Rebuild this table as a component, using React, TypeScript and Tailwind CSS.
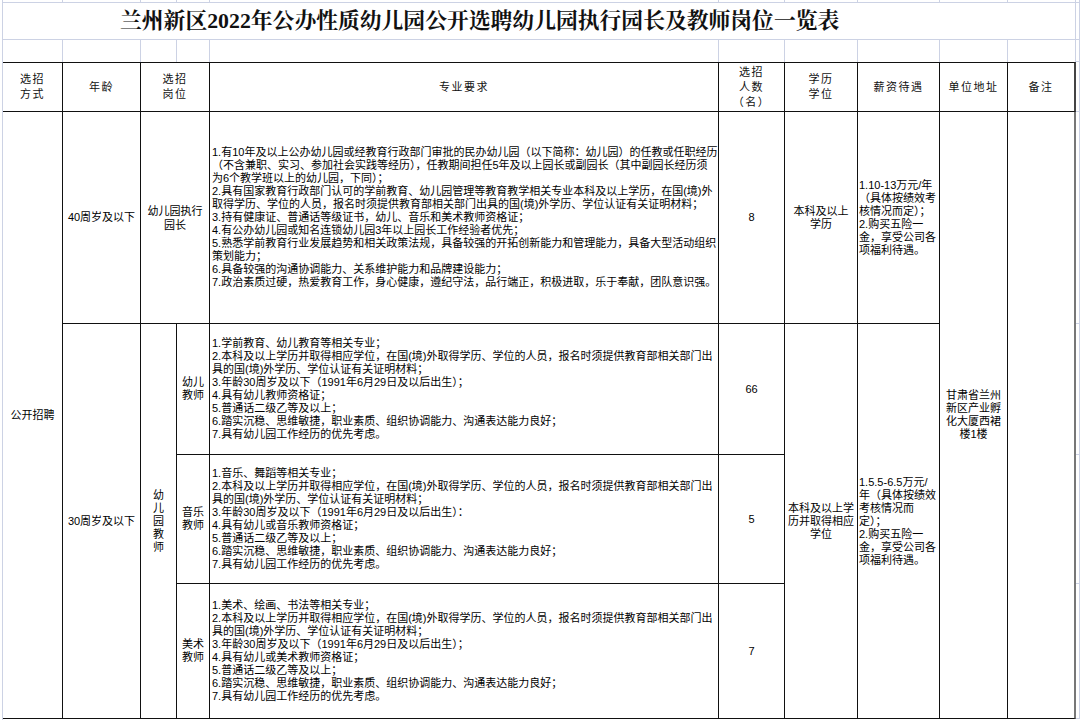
import type { ReactNode } from "react";

// Spreadsheet-style recruitment table: one CSS grid, cells placed by row/col start and span.
const DARK = "border-r border-b border-[#111]";
const LIGHT = "border-r border-b border-[#ccd2e4]";

const req1 = [
  "1.有10年及以上公办幼儿园或经教育行政部门审批的民办幼儿园（以下简称：幼儿园）的任教或任职经历",
  "（不含兼职、实习、参加社会实践等经历），任教期间担任5年及以上园长或副园长（其中副园长经历须",
  "为6个教学班以上的幼儿园，下同）；",
  "2.具有国家教育行政部门认可的学前教育、幼儿园管理等教育教学相关专业本科及以上学历，在国(境)外",
  "取得学历、学位的人员，报名时须提供教育部相关部门出具的国(境)外学历、学位认证有关证明材料；",
  "3.持有健康证、普通话等级证书，幼儿、音乐和美术教师资格证；",
  "4.有公办幼儿园或知名连锁幼儿园3年以上园长工作经验者优先；",
  "5.熟悉学前教育行业发展趋势和相关政策法规，具备较强的开拓创新能力和管理能力，具备大型活动组织",
  "策划能力；",
  "6.具备较强的沟通协调能力、关系维护能力和品牌建设能力；",
  "7.政治素质过硬，热爱教育工作，身心健康，遵纪守法，品行端正，积极进取，乐于奉献，团队意识强。",
];

const teacherReq = (first: string, age: string, cert: string) => [
  first,
  "2.本科及以上学历并取得相应学位，在国(境)外取得学历、学位的人员，报名时须提供教育部相关部门出",
  "具的国(境)外学历、学位认证有关证明材料；",
  age,
  cert,
  "5.普通话二级乙等及以上；",
  "6.踏实沉稳、思维敏捷，职业素质、组织协调能力、沟通表达能力良好；",
  "7.具有幼儿园工作经历的优先考虑。",
];

const AGE = "3.年龄30周岁及以下（1991年6月29日及以后出生）；";

const teachers = [
  { row: "row-start-6", post: ["幼儿", "教师"], count: "66", req: teacherReq("1.学前教育、幼儿教育等相关专业；", AGE, "4.具有幼儿教师资格证；") },
  {
    row: "row-start-7",
    post: ["音乐", "教师"],
    count: "5",
    req: teacherReq("1.音乐、舞蹈等相关专业；", "3.年龄30周岁及以下（1991年6月29日及以后出生）：", "4.具有幼儿或音乐教师资格证；"),
  },
  { row: "row-start-8", post: ["美术", "教师"], count: "7", req: teacherReq("1.美术、绘画、书法等相关专业；", AGE, "4.具有幼儿或美术教师资格证；") },
];

const Lines = ({ lines, className = "" }: { lines: string[]; className?: string }) => (
  <div className={className}>
    {lines.map((l, i) => (
      <div key={i} className="whitespace-nowrap">
        {l}
      </div>
    ))}
  </div>
);

const Head = ({ className, children }: { className: string; children: ReactNode }) => (
  <div
    className={`row-start-4 flex items-center justify-center border-t border-[#111] text-center text-[11px] leading-[15px] tracking-[1.5px] text-[#111] ${DARK} ${className}`}
  >
    {children}
  </div>
);

const Body = ({ className, children }: { className: string; children?: ReactNode }) => (
  <div className={`flex items-center justify-center text-center text-[11px] leading-[13px] text-black ${DARK} ${className}`}>
    {children}
  </div>
);

export default function App() {
  const topCols = ["col-start-2", "col-start-3", "col-start-4", "col-start-5", "col-start-6", "col-start-7", "col-start-8", "col-start-9", "col-start-10", "col-start-11"];

  return (
    <div className="grid h-[720px] w-[1080px] grid-cols-[3px_60px_78px_36px_33px_509px_66px_73px_82px_68px_68px_1fr] grid-rows-[3px_37px_22px_50px_212px_131px_129px_135px_1fr] overflow-hidden bg-white font-['Liberation_Sans','Noto_Sans_CJK_SC',sans-serif]">
      {/* left gridline */}
      <div className="col-start-1 row-span-9 row-start-1 border-r border-[#ccd2e4]" />

      {/* sliver row above the title and the empty row below it */}
      {topCols.map((c) => (
        <div key={`a-${c}`} className={`row-start-1 ${c} ${LIGHT}`} />
      ))}
      <div className={`col-start-12 row-start-1 ${LIGHT}`} />
      {topCols.map((c) => (
        <div key={`b-${c}`} className={`row-start-3 ${c} border-r border-[#ccd2e4]`} />
      ))}

      {/* title */}
      <div
        className={`col-span-10 col-start-2 row-start-2 flex items-center pl-[117px] font-['Liberation_Serif','Noto_Serif_CJK_SC','Noto_Sans_CJK_SC',serif] text-[21.8px] font-bold text-[#111] ${LIGHT}`}
      >
        兰州新区2022年公办性质幼儿园公开选聘幼儿园执行园长及教师岗位一览表
      </div>
      <div className={`col-start-12 row-start-2 ${LIGHT}`} />

      {/* header */}
      <Head className="col-start-2">
        <Lines lines={["选招", "方式"]} />
      </Head>
      <Head className="col-start-3">年龄</Head>
      <Head className="col-span-2 col-start-4">
        <Lines lines={["选招", "岗位"]} />
      </Head>
      <Head className="col-start-6">专业要求</Head>
      <Head className="col-start-7">
        <Lines lines={["选招", "人数", "（名）"]} />
      </Head>
      <Head className="col-start-8">
        <Lines lines={["学历", "学位"]} />
      </Head>
      <Head className="col-start-9">薪资待遇</Head>
      <Head className="col-start-10">单位地址</Head>
      <Head className="col-start-11 border-r-2 border-r-[#444]">备注</Head>

      {/* merged left column */}
      <Body className="col-start-2 row-span-4 row-start-5">公开招聘</Body>

      {/* principal row */}
      <Body className="col-start-3 row-start-5">40周岁及以下</Body>
      <Body className="col-span-2 col-start-4 row-start-5 leading-[14px]">
        <Lines lines={["幼儿园执行", "园长"]} />
      </Body>
      <Body className="col-start-6 row-start-5 justify-start pl-[2px] text-left">
        <Lines lines={req1} />
      </Body>
      <Body className="col-start-7 row-start-5">8</Body>
      <Body className="col-start-8 row-start-5">
        <Lines lines={["本科及以上", "学历"]} />
      </Body>
      <Body className="col-start-9 row-start-5 justify-start pl-[1px] text-left">
        <Lines lines={["1.10-13万元/年", "（具体按绩效考", "核情况而定）；", "2.购买五险一", "金，享受公司各", "项福利待遇。"]} />
      </Body>

      {/* teacher rows */}
      <Body className="col-start-3 row-span-3 row-start-6">30周岁及以下</Body>
      <Body className="col-start-4 row-span-3 row-start-6">
        <Lines lines={["幼", "儿", "园", "教", "师"]} />
      </Body>
      {teachers.map((t) => (
        <div key={t.count} className="contents">
          <Body className={`col-start-5 ${t.row}`}>
            <Lines lines={t.post} />
          </Body>
          <Body className={`col-start-6 ${t.row} justify-start pl-[2px] text-left`}>
            <Lines lines={t.req} />
          </Body>
          <Body className={`col-start-7 ${t.row}`}>{t.count}</Body>
        </div>
      ))}
      <Body className="col-start-8 row-span-3 row-start-6">
        <Lines lines={["本科及以上学", "历并取得相应", "学位"]} />
      </Body>
      <Body className="col-start-9 row-span-3 row-start-6 justify-start pl-[1px] text-left">
        <Lines lines={["1.5.5-6.5万元/", "年（具体按绩效", "考核情况而", "定）；", "2.购买五险一", "金，享受公司各", "项福利待遇。"]} />
      </Body>

      {/* address + notes */}
      <Body className="col-start-10 row-span-4 row-start-5">
        <Lines lines={["甘肃省兰州", "新区产业孵", "化大厦西裙", "楼1楼"]} />
      </Body>
      <Body className="col-start-11 row-span-4 row-start-5 border-r-2 border-r-[#777]" />

      {/* right gridline strip */}
      {["row-start-3", "row-start-4", "row-start-5", "row-start-6", "row-start-7", "row-start-8"].map((r) => (
        <div key={r} className={`col-start-12 ${r} ${LIGHT}`} />
      ))}
    </div>
  );
}
